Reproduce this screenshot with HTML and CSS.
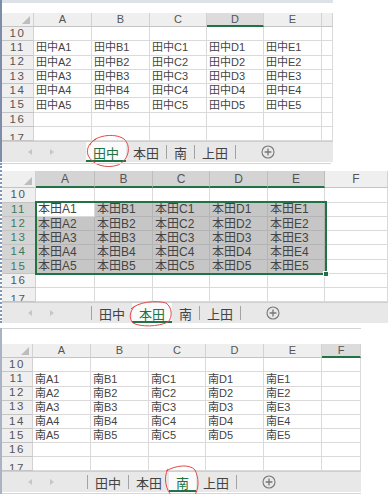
FILE: index.html
```html
<!DOCTYPE html>
<html>
<head>
<meta charset="utf-8">
<title>シート切り替え</title>
<link rel="stylesheet" href="styles.css">
</head>
<body>

<!-- 田中 sheet -->
<div class="shot s1">
  <div class="fbar1"></div>
  <div class="grid g1">
    <div class="corner"></div><div class="ch">A</div><div class="ch">B</div><div class="ch">C</div><div class="ch act">D</div><div class="ch">E</div><div class="ch"></div>
    <div class="rh">10</div><div class="c"></div><div class="c"></div><div class="c"></div><div class="c"></div><div class="c"></div><div class="c"></div>
    <div class="rh">11</div><div class="c">田中A1</div><div class="c">田中B1</div><div class="c">田中C1</div><div class="c">田中D1</div><div class="c">田中E1</div><div class="c"></div>
    <div class="rh">12</div><div class="c">田中A2</div><div class="c">田中B2</div><div class="c">田中C2</div><div class="c">田中D2</div><div class="c">田中E2</div><div class="c"></div>
    <div class="rh">13</div><div class="c">田中A3</div><div class="c">田中B3</div><div class="c">田中C3</div><div class="c">田中D3</div><div class="c">田中E3</div><div class="c"></div>
    <div class="rh">14</div><div class="c">田中A4</div><div class="c">田中B4</div><div class="c">田中C4</div><div class="c">田中D4</div><div class="c">田中E4</div><div class="c"></div>
    <div class="rh">15</div><div class="c">田中A5</div><div class="c">田中B5</div><div class="c">田中C5</div><div class="c">田中D5</div><div class="c">田中E5</div><div class="c"></div>
    <div class="rh">16</div><div class="c"></div><div class="c"></div><div class="c"></div><div class="c"></div><div class="c"></div><div class="c"></div>
    <div class="rh last">17</div><div class="c"></div><div class="c"></div><div class="c"></div><div class="c"></div><div class="c"></div><div class="c"></div>
  </div>
  <div class="tabs">
    <div class="nav n1"><i class="prev"></i><i class="next"></i></div>
    <span class="tab on">田中</span>
    <span class="tab">本田</span><span class="sep"></span>
    <span class="tab">南</span><span class="sep"></span>
    <span class="tab">上田</span><span class="sep"></span>
    <svg class="add" width="14" height="14" viewBox="0 0 14 14"><circle cx="7" cy="7" r="6" fill="none" stroke="#777" stroke-width="1.1"/><path d="M7 3.6v6.8M3.6 7h6.8" stroke="#777" stroke-width="1.3"/></svg>
  </div>
  <svg class="ring r1" width="45" height="36" viewBox="0 0 45 36"><path d="M5 13C8 4 29 0 39 7C46 13 45 27 33 33C21 37 7 33 3 23C1 17 4 11 11 7"/></svg>
</div>

<!-- 本田 sheet -->
<div class="shot s2">
  <div class="fbar2"><div class="fline"></div></div>
  <div class="grid g2">
    <div class="corner"></div><div class="ch hl">A</div><div class="ch hl">B</div><div class="ch hl">C</div><div class="ch hl">D</div><div class="ch hl">E</div><div class="ch">F</div>
    <div class="rh">10</div><div class="c"></div><div class="c"></div><div class="c"></div><div class="c"></div><div class="c"></div><div class="c"></div>
    <div class="rh hl">11</div><div class="c">本田A1</div><div class="c s">本田B1</div><div class="c s">本田C1</div><div class="c s">本田D1</div><div class="c s">本田E1</div><div class="c"></div>
    <div class="rh hl">12</div><div class="c s">本田A2</div><div class="c s">本田B2</div><div class="c s">本田C2</div><div class="c s">本田D2</div><div class="c s">本田E2</div><div class="c"></div>
    <div class="rh hl">13</div><div class="c s">本田A3</div><div class="c s">本田B3</div><div class="c s">本田C3</div><div class="c s">本田D3</div><div class="c s">本田E3</div><div class="c"></div>
    <div class="rh hl">14</div><div class="c s">本田A4</div><div class="c s">本田B4</div><div class="c s">本田C4</div><div class="c s">本田D4</div><div class="c s">本田E4</div><div class="c"></div>
    <div class="rh hl">15</div><div class="c s">本田A5</div><div class="c s">本田B5</div><div class="c s">本田C5</div><div class="c s">本田D5</div><div class="c s">本田E5</div><div class="c"></div>
    <div class="rh">16</div><div class="c"></div><div class="c"></div><div class="c"></div><div class="c"></div><div class="c"></div><div class="c"></div>
    <div class="rh last">17</div><div class="c"></div><div class="c"></div><div class="c"></div><div class="c"></div><div class="c"></div><div class="c"></div>
    <div class="selbox"><span class="handle"></span></div>
  </div>
  <div class="tabs">
    <div class="nav n2"><i class="prev"></i><i class="next"></i></div>
    <span class="sep"></span>
    <span class="tab">田中</span>
    <span class="tab on">本田</span>
    <span class="tab">南</span><span class="sep"></span>
    <span class="tab">上田</span><span class="sep"></span>
    <svg class="add" width="14" height="14" viewBox="0 0 14 14"><circle cx="7" cy="7" r="6" fill="none" stroke="#777" stroke-width="1.1"/><path d="M7 3.6v6.8M3.6 7h6.8" stroke="#777" stroke-width="1.3"/></svg>
  </div>
  <svg class="ring r2" width="46" height="28" viewBox="0 0 46 28"><path d="M3 9C10 2 28 0 38 3C44 7 45 17 40 22C30 27 12 27 5 23C1 19 1 12 7 6"/></svg>
</div>

<!-- 南 sheet -->
<div class="shot s3">
  <div class="fbar3"><div class="fline"></div></div>
  <div class="grid g3">
    <div class="corner"></div><div class="ch">A</div><div class="ch">B</div><div class="ch">C</div><div class="ch">D</div><div class="ch">E</div><div class="ch act">F</div>
    <div class="rh">10</div><div class="c"></div><div class="c"></div><div class="c"></div><div class="c"></div><div class="c"></div><div class="c"></div>
    <div class="rh">11</div><div class="c">南A1</div><div class="c">南B1</div><div class="c">南C1</div><div class="c">南D1</div><div class="c">南E1</div><div class="c"></div>
    <div class="rh">12</div><div class="c">南A2</div><div class="c">南B2</div><div class="c">南C2</div><div class="c">南D2</div><div class="c">南E2</div><div class="c"></div>
    <div class="rh">13</div><div class="c">南A3</div><div class="c">南B3</div><div class="c">南C3</div><div class="c">南D3</div><div class="c">南E3</div><div class="c"></div>
    <div class="rh">14</div><div class="c">南A4</div><div class="c">南B4</div><div class="c">南C4</div><div class="c">南D4</div><div class="c">南E4</div><div class="c"></div>
    <div class="rh">15</div><div class="c">南A5</div><div class="c">南B5</div><div class="c">南C5</div><div class="c">南D5</div><div class="c">南E5</div><div class="c"></div>
    <div class="rh">16</div><div class="c"></div><div class="c"></div><div class="c"></div><div class="c"></div><div class="c"></div><div class="c"></div>
    <div class="rh last">17</div><div class="c"></div><div class="c"></div><div class="c"></div><div class="c"></div><div class="c"></div><div class="c"></div>
  </div>
  <div class="tabs">
    <div class="nav n3"><i class="prev"></i><i class="next"></i></div>
    <span class="sep"></span>
    <span class="tab">田中</span><span class="sep"></span>
    <span class="tab">本田</span>
    <span class="tab on">南</span>
    <span class="tab">上田</span><span class="sep"></span>
    <svg class="add" width="14" height="14" viewBox="0 0 14 14"><circle cx="7" cy="7" r="6" fill="none" stroke="#777" stroke-width="1.1"/><path d="M7 3.6v6.8M3.6 7h6.8" stroke="#777" stroke-width="1.3"/></svg>
  </div>
  <div class="foot"></div>
  <svg class="ring r3" width="38" height="37" viewBox="0 0 38 37"><path d="M4 7C14 1 28 0 33 6C37 14 37 24 33 31C28 37 16 37 10 32C4 26 1 14 6 5"/></svg>
</div>

</body>
</html>
```

FILE: styles.css
```css
body {
    margin: 0;
    background: #fff;
    font-family: "Noto Sans CJK JP", "Noto Sans", sans-serif;
    color: #444;
}

.shot {
    position: relative;
}
.s1 {
    width: 331px;
    border-left: 2px solid #7d8ca8;
}
.s2 {
    width: 386px;
    border-left: 2px dotted #7f95bb;
}
.s3 {
    width: 359px;
    border-left: 2px solid #a9b3c4;
}

/* formula bar leftovers above each sheet */
.fbar1 {
    height: 10px;
    border-top: 3px solid #dde1e8;
}
.fbar2 {
    height: 8px;
}
.fbar2 .fline {
    margin-top: 1px;
    width: 329px;
    height: 1px;
    background: #d4d4d4;
}
.fbar3 {
    height: 16px;
}
.fbar3 .fline {
    margin-top: 5px;
    width: 359px;
    height: 1px;
    background: #d4d4d4;
}

/* sheet grid */
.grid {
    display: grid;
    position: relative;
    line-height: 1;
    font-family: "Liberation Sans", "Noto Sans CJK JP", sans-serif;
}
.g1 {
    grid-template-columns: 32px 58px 58px 57px 57px 58px 11px;
    grid-template-rows: 14px repeat(8, 14.3px);
    font-size: 11px;
}
.g2 {
    grid-template-columns: 34px 59px 58px 57px 58px 57px 63px;
    grid-template-rows: 17px repeat(8, 14.25px);
    font-size: 12px;
}
.g3 {
    grid-template-columns: 31px 58px 58px 57px 58px 58px 39px;
    grid-template-rows: 14px repeat(8, 14.1px);
    font-size: 11px;
}
.grid > div {
    box-sizing: border-box;
    display: flex;
    align-items: center;
    white-space: nowrap;
}

.c {
    border-right: 1px solid #dadada;
    border-bottom: 1px solid #dadada;
    padding-left: 2px;
}
.c.s {
    background: #c6c6c6;
    border-color: #b4b4b4;
}

.ch, .rh, .corner {
    background: #efefef;
    color: #555;
    border-right: 1px solid #d2d2d2;
    border-bottom: 1px solid #c4c4c4;
}
.ch {
    justify-content: center;
    font-size: 11px;
}
.g2 .ch {
    font-size: 12px;
}
.rh {
    justify-content: center;
    letter-spacing: 1.5px;
    font-size: 11.5px;
}
.rh.last {
    align-items: flex-start !important;
    padding-top: 6px;
    overflow: hidden;
}
.ch.act {
    background: #dcdcdc;
    border-bottom: 2px solid #217346;
}
.ch.hl {
    background: #d4d4d4;
    border-right-color: #bdbdbd;
    border-bottom: 2px solid #217346;
}
.rh.hl {
    background: #d4d4d4;
    color: #3d7a58;
}

.corner {
    position: relative;
}
.corner::after {
    content: "";
    position: absolute;
    right: 3px;
    bottom: 2px;
    border-left: 8px solid transparent;
    border-bottom: 8px solid #bdbdbd;
}

/* selection border on 本田 */
.selbox {
    position: absolute;
    left: 33px;
    top: 30px;
    width: 292px;
    height: 74px;
    border: 2px solid #217346;
}
.handle {
    position: absolute;
    right: -4px;
    bottom: -4px;
    width: 4px;
    height: 4px;
    background: #217346;
    border: 1px solid #fff;
}

/* sheet tabs */
.tabs {
    display: flex;
    align-items: center;
    height: 21px;
    background: #e8e8e8;
    border-top: 1px solid #cfcfcf;
    box-sizing: border-box;
    font-size: 13px;
    line-height: 1;
    color: #444;
}
.nav {
    display: flex;
    align-items: center;
    gap: 18px;
    padding-left: 26px;
    box-sizing: border-box;
}
.n1 { width: 84px; }
.n2 { width: 89px; }
.n3 { width: 85px; }
.nav i {
    width: 0;
    height: 0;
    border-top: 3px solid transparent;
    border-bottom: 3px solid transparent;
}
.nav .prev { border-right: 4px solid #c6c6c6; }
.nav .next { border-left: 4px solid #c6c6c6; }

.tab {
    height: 100%;
    display: flex;
    align-items: center;
    padding: 0 7px;
}
.tab.on {
    background: #fafafa;
    color: #217346;
    box-shadow: inset 0 -2px 0 #217346;
}
.sep {
    width: 1px;
    height: 14px;
    background: #a3a3a3;
}
.add {
    margin-left: 25px;
}

.foot {
    margin-top: 1px;
    height: 1px;
    background: #d6d6d6;
}

/* hand-drawn red circles */
.ring {
    position: absolute;
    fill: none;
    stroke: #e24a4a;
    stroke-width: 1;
}
.r1 { left: 83px; top: 132px; }
.r2 { left: 126px; top: 137px; }
.r3 { left: 160px; top: 136px; }
```
